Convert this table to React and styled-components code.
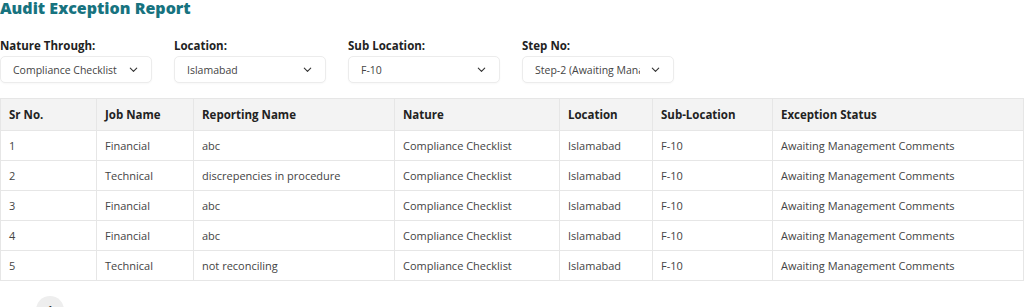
import React from "react";
import styled, { createGlobalStyle } from "styled-components";

const rows = [
  { id: 1, job: "Financial", reporting: "abc" },
  { id: 2, job: "Technical", reporting: "discrepencies in procedure" },
  { id: 3, job: "Financial", reporting: "abc" },
  { id: 4, job: "Financial", reporting: "abc" },
  { id: 5, job: "Technical", reporting: "not reconciling" },
];

const filters = [
  { label: "Nature Through:", value: "Compliance Checklist" },
  { label: "Location:", value: "Islamabad" },
  { label: "Sub Location:", value: "F-10" },
  { label: "Step No:", value: "Step-2 (Awaiting Management Comments)" },
];

const columns = [
  { title: "Sr No.", width: 96 },
  { title: "Job Name", width: 97 },
  { title: "Reporting Name", width: 201 },
  { title: "Nature", width: 165 },
  { title: "Location", width: 93 },
  { title: "Sub-Location", width: 120 },
  { title: "Exception Status", width: 251 },
];

function Chevron() {
  return (
    <svg width="11" height="11" viewBox="0 0 24 24" fill="none" stroke="#333" strokeWidth="2.4" strokeLinecap="round" strokeLinejoin="round">
      <path d="M5 9l7 7 7-7" />
    </svg>
  );
}

function App() {
  return (
    <>
      <GlobalStyle />
      <Page>
        <Title>Audit Exception Report</Title>
        <Filters>
          {filters.map((f) => (
            <Field key={f.label}>
              <Label>{f.label}</Label>
              <Select>
                <SelectText>{f.value}</SelectText>
                <Chevron />
              </Select>
            </Field>
          ))}
        </Filters>
        <Table>
          <colgroup>
            {columns.map((c) => (
              <col key={c.title} style={{ width: c.width }} />
            ))}
          </colgroup>
          <thead>
            <tr>
              {columns.map((c) => (
                <Th key={c.title}>{c.title}</Th>
              ))}
            </tr>
          </thead>
          <tbody>
            {rows.map((r) => (
              <tr key={r.id}>
                <Td>{r.id}</Td>
                <Td>{r.job}</Td>
                <Td>{r.reporting}</Td>
                <Td>Compliance Checklist</Td>
                <Td>Islamabad</Td>
                <Td>F-10</Td>
                <Td>Awaiting Management Comments</Td>
              </tr>
            ))}
          </tbody>
        </Table>
        <Pager>
          <Arrow>‹</Arrow>
          <PageDot>1</PageDot>
          <Arrow>›</Arrow>
        </Pager>
      </Page>
    </>
  );
}

const GlobalStyle = createGlobalStyle`
  body {
    margin: 0;
    background: #fff;
    font-family: "Open Sans", "Noto Sans", sans-serif;
    color: #333;
  }
`;

const Page = styled.div`
  width: 1024px;
  height: 307px;
  overflow: hidden;
`;

const Title = styled.h1`
  margin: -2px 0 0 0;
  font-size: 16px;
  line-height: 20px;
  font-weight: 800;
  color: #17737f;
`;

const Filters = styled.div`
  display: flex;
  gap: 22px;
  margin-top: 20px;
`;

const Field = styled.div`
  display: flex;
  flex-direction: column;
  width: 152px;
`;

const Label = styled.div`
  font-size: 11.5px;
  line-height: 16px;
  font-weight: 700;
  color: #222;
  margin-bottom: 2px;
`;

const Select = styled.div`
  box-sizing: border-box;
  display: flex;
  align-items: center;
  justify-content: space-between;
  height: 27px;
  padding: 0 12px 0 12px;
  border: 1px solid #ececec;
  border-radius: 5px;
  background: #fff;
  box-shadow: 0 1px 2px rgba(0, 0, 0, 0.03);
  gap: 10px;
`;

const SelectText = styled.span`
  font-size: 10.5px;
  color: #444;
  white-space: nowrap;
  overflow: hidden;
  flex: 1;
`;

const Table = styled.table`
  margin-top: 15px;
  width: 1023px;
  table-layout: fixed;
  border-collapse: collapse;
  border: 1px solid #e6e6e6;
`;

const Th = styled.th`
  height: 31px;
  padding: 0 8px;
  background: #f3f3f3;
  text-align: left;
  font-size: 11.5px;
  font-weight: 700;
  color: #222;
  border-left: 1px solid #e6e6e6;
`;

const Td = styled.td`
  height: 29px;
  padding: 0 8px;
  font-size: 11px;
  color: #444;
  border: 1px solid #e6e6e6;
  white-space: nowrap;
`;

const Pager = styled.div`
  display: flex;
  align-items: flex-start;
  gap: 16px;
  margin-top: 15px;
  padding-left: 16px;
`;

const Arrow = styled.span`
  font-size: 14px;
  line-height: 20px;
  color: #ccc;
  margin-top: 6px;
`;

const PageDot = styled.div`
  width: 28px;
  height: 28px;
  border-radius: 50%;
  background: #eee;
  display: flex;
  justify-content: center;
  padding-top: 6px;
  box-sizing: border-box;
  font-size: 11px;
  font-weight: 600;
  color: #333;
`;

export default App;
